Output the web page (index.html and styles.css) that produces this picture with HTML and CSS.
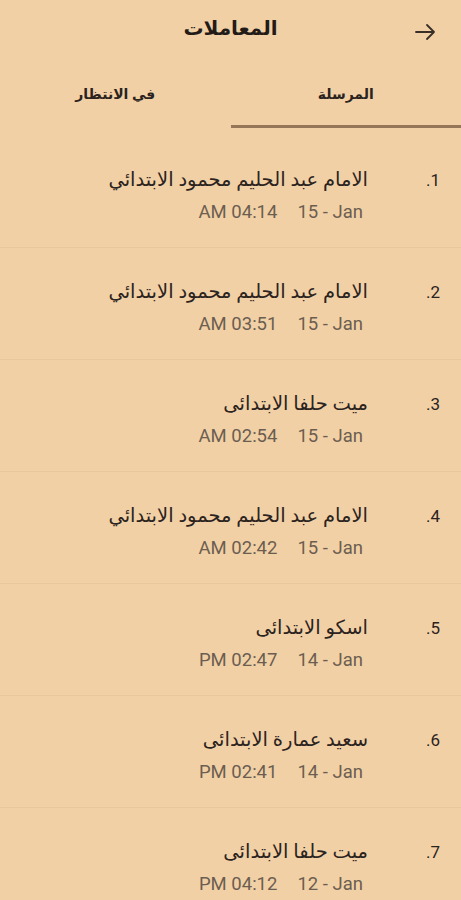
FILE: index.html
```html
<!DOCTYPE html>
<html lang="ar" dir="rtl">
<head>
<meta charset="utf-8">
<title>المعاملات</title>
<link rel="stylesheet" href="styles.css">
</head>
<body>
<div class="screen">
  <header class="topbar">
    <div class="back">
      <svg width="20" height="16" viewBox="0 0 20 16" aria-hidden="true"><path d="M1 8H19M12 1L19 8L12 15" fill="none" stroke="#3a2f28" stroke-width="1.8" stroke-linecap="round" stroke-linejoin="round"/></svg>
    </div>
    <h1 class="title">المعاملات</h1>
    <div class="spacer"></div>
  </header>
  <nav class="tabs">
    <div class="tab active">المرسلة</div>
    <div class="tab">في الانتظار</div>
  </nav>
  <ul class="list">
    <li class="item"><span class="num">1.</span><div class="body"><div class="name">الامام عبد الحليم محمود الابتدائي</div><div class="meta"><span>15 - Jan</span><span>AM 04:14</span></div></div></li>
    <li class="item"><span class="num">2.</span><div class="body"><div class="name">الامام عبد الحليم محمود الابتدائي</div><div class="meta"><span>15 - Jan</span><span>AM 03:51</span></div></div></li>
    <li class="item"><span class="num">3.</span><div class="body"><div class="name">ميت حلفا الابتدائى</div><div class="meta"><span>15 - Jan</span><span>AM 02:54</span></div></div></li>
    <li class="item"><span class="num">4.</span><div class="body"><div class="name">الامام عبد الحليم محمود الابتدائي</div><div class="meta"><span>15 - Jan</span><span>AM 02:42</span></div></div></li>
    <li class="item"><span class="num">5.</span><div class="body"><div class="name">اسكو الابتدائى</div><div class="meta"><span>14 - Jan</span><span>PM 02:47</span></div></div></li>
    <li class="item"><span class="num">6.</span><div class="body"><div class="name">سعيد عمارة الابتدائى</div><div class="meta"><span>14 - Jan</span><span>PM 02:41</span></div></div></li>
    <li class="item"><span class="num">7.</span><div class="body"><div class="name">ميت حلفا الابتدائى</div><div class="meta"><span>12 - Jan</span><span>PM 04:12</span></div></div></li>
  </ul>
</div>
</body>
</html>
```
FILE: styles.css
```css
html, body {
  margin: 0;
  padding: 0;
  background: #f2d0a5;
}
body {
  font-family: Roboto, "DejaVu Sans", sans-serif;
  color: #2b231e;
  direction: rtl;
  overflow: hidden;
}
.screen {
  width: 461px;
  height: 900px;
  overflow: hidden;
}
.topbar {
  height: 60px;
  display: grid;
  grid-template-columns: 1fr auto 1fr;
  align-items: center;
}
.back {
  justify-self: start;
  padding-right: 26px;
  display: flex;
  align-items: center;
  padding-top: 3px;
}
.title {
  margin: 0;
  font-size: 20px;
  font-weight: bold;
  color: #231b17;
  line-height: 24px;
  padding-bottom: 4px;
}
.tabs {
  height: 68px;
  display: flex;
}
.tab {
  flex: 1;
  display: flex;
  align-items: center;
  justify-content: center;
  font-size: 14px;
  font-weight: bold;
  color: #2b231e;
  box-sizing: border-box;
}
.tab.active {
  border-bottom: 3px solid #967659;
  padding-top: 3px;
}
.list {
  list-style: none;
  margin: 0;
  padding: 8px 0 0 0;
}
.item {
  height: 112px;
  box-sizing: border-box;
  border-bottom: 1px solid #ebc89c;
  display: flex;
  align-items: flex-start;
  padding: 32px 21px 0 0;
}
.num {
  width: 72px;
  flex: none;
  font-size: 17px;
  line-height: 24px;
  color: #2b231e;
}
.body {
  display: flex;
  flex-direction: column;
  gap: 8px;
}
.name {
  font-size: 19.5px;
  line-height: 24px;
  color: #2b231e;
}
.meta {
  display: flex;
  gap: 20px;
  padding-right: 5px;
  font-size: 18.5px;
  line-height: 24px;
  color: #6b5e51;
}
.meta span {
  direction: ltr;
  unicode-bidi: isolate;
}
```
